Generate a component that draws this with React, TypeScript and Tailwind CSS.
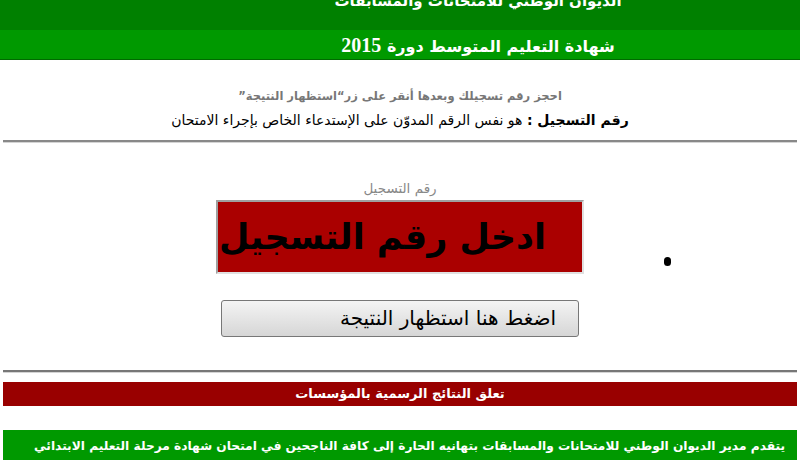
export default function App() {
  return (
    <div
      dir="rtl"
      className="w-[800px] h-[460px] overflow-hidden bg-white"
      style={{ fontFamily: '"DejaVu Sans", Arial, sans-serif' }}
    >
      {/* header bands */}
      <div className="h-[30px] overflow-hidden bg-[#008000]">
        <div className="-mt-[9px] pl-[156px] text-center text-[15px] font-bold leading-[20px] text-white">
          الديوان الوطني للامتحانات والمسابقات
        </div>
      </div>
      <div className="h-[30px] border-b border-[#006a00] bg-[#009900]">
        <div className="pl-[156px] pt-[4px] text-center text-[16px] font-bold leading-[22px] text-white">
          شهادة التعليم المتوسط دورة{' '}
          <span className="text-[20px]" style={{ fontFamily: '"Liberation Serif", serif' }}>
            2015
          </span>
        </div>
      </div>

      {/* instructions */}
      <div className="pt-[26px] text-center">
        <p className="text-[11.5px] font-bold leading-[20px] text-[#777]">
          احجز رقم تسجيلك وبعدها أنقر على زر“استظهار النتيجة”
        </p>
        <p className="mt-[4px] text-[14px] leading-[20px] text-black">
          <span className="font-bold">رقم التسجيل :</span> هو نفس الرقم المدوّن على الإستدعاء الخاص بإجراء الامتحان
        </p>
      </div>

      <div className="mx-[3px] mt-[10px] h-[3px] border-t-2 border-[#888] bg-[#d4d4d4]" />

      {/* form */}
      <div className="relative pt-[36px]">
        <div className="text-center text-[13.5px] leading-[18px] text-[#888]">رقم التسجيل</div>
        <div className="mx-auto mt-[3px] flex h-[74px] w-[368px] items-center border-2 border-t-[#a0a0a0] border-l-[#a0a0a0] border-r-[#e0e0e0] border-b-[#e0e0e0] bg-[#aa0000] pr-[36px]">
          <span className="whitespace-nowrap text-[35px] font-bold leading-none text-black">ادخل رقم التسجيل</span>
        </div>
        <span className="absolute left-[664px] top-[114px] h-[9px] w-[7px] rounded-full bg-black" />
        <button className="mx-auto mt-[26px] block h-[37px] w-[358px] rounded-[3px] border border-[#777] bg-gradient-to-b from-[#f4f4f4] to-[#d6d6d6] pr-[22px] text-right text-[20px] leading-[35px] text-black">
          اضغط هنا استظهار النتيجة
        </button>
      </div>

      <div className="mx-[3px] mt-[33px] h-[3px] border-t-2 border-[#777] bg-[#d4d4d4]" />

      {/* notices */}
      <div className="mx-[3px] mt-[9px] h-[24px] bg-[#990000] text-center text-[13px] font-bold leading-[24px] text-white">
        تعلق النتائج الرسمية بالمؤسسات
      </div>
      <div className="mx-[3px] mt-[24px] bg-[#009900] px-[12px] pt-[3px] text-right text-[12.2px] font-bold leading-[26px] text-white">
        يتقدم مدير الديوان الوطني للامتحانات والمسابقات بتهانيه الحارة إلى كافة الناجحين في امتحان شهادة مرحلة التعليم الابتدائي
        وشهادة التعليم المتوسط ويتمنى لهم النجاح والتوفيق
      </div>
    </div>
  )
}
